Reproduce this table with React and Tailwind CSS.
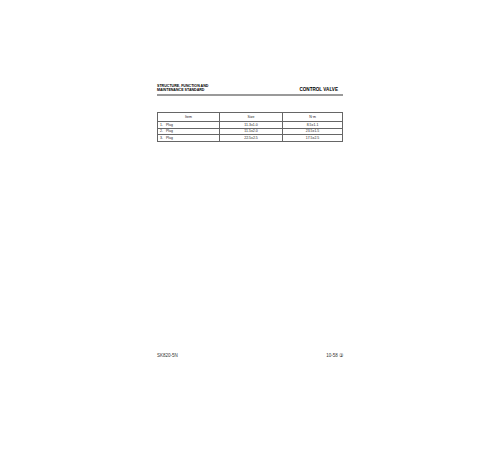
import React from 'react';

const rows = [
  { n: '1.', item: 'Plug', size: '11.3±1.0', torque: '8.5±1.1' },
  { n: '2.', item: 'Plug', size: '11.5±2.0', torque: '23.5±1.5' },
  { n: '3.', item: 'Plug', size: '22.5±2.5', torque: '17.5±2.5' },
];

const App = () => {
  return (
    <div className="h-[450px] w-[500px] bg-white font-['Liberation_Sans',Arial,sans-serif] text-black">
      <div className="mx-auto flex h-full w-[186px] flex-col pt-[84px]">
        <div className="flex items-end justify-between pr-[5px]">
          <div className="text-[3.6px] font-bold leading-[4px]">
            <p>STRUCTURE, FUNCTION AND</p>
            <p>MAINTENANCE STANDARD</p>
          </div>
          <p className="text-[4.6px] font-bold leading-[5px]">CONTROL VALVE</p>
        </div>
        <div className="mt-[2px] h-[1.5px] bg-[#9a9a9a]" />

        <table className="mt-[16px] w-full border-collapse text-[3.5px] leading-[4px] text-[#222]">
          <thead>
            <tr className="h-[9.5px]">
              <th className="w-[62px] border border-[#666] font-normal">Item</th>
              <th className="w-[63px] border border-[#666] font-normal">Size</th>
              <th className="border border-[#666] font-normal">N·m</th>
            </tr>
          </thead>
          <tbody>
            {rows.map((r) => (
              <tr key={r.n} className="h-[6.6px]">
                <td className="border border-[#666] pl-[2px]">
                  <span className="inline-block w-[6px]">{r.n}</span>
                  {r.item}
                </td>
                <td className="border border-[#666] text-center">{r.size}</td>
                <td className="border border-[#666] text-center">{r.torque}</td>
              </tr>
            ))}
          </tbody>
        </table>

        <div className="mt-auto mb-[92px] flex items-center justify-between text-[4.5px] leading-[5px] text-[#333]">
          <p>SK820-5N</p>
          <p>10-58 ③</p>
        </div>
      </div>
    </div>
  );
};

export default App;
